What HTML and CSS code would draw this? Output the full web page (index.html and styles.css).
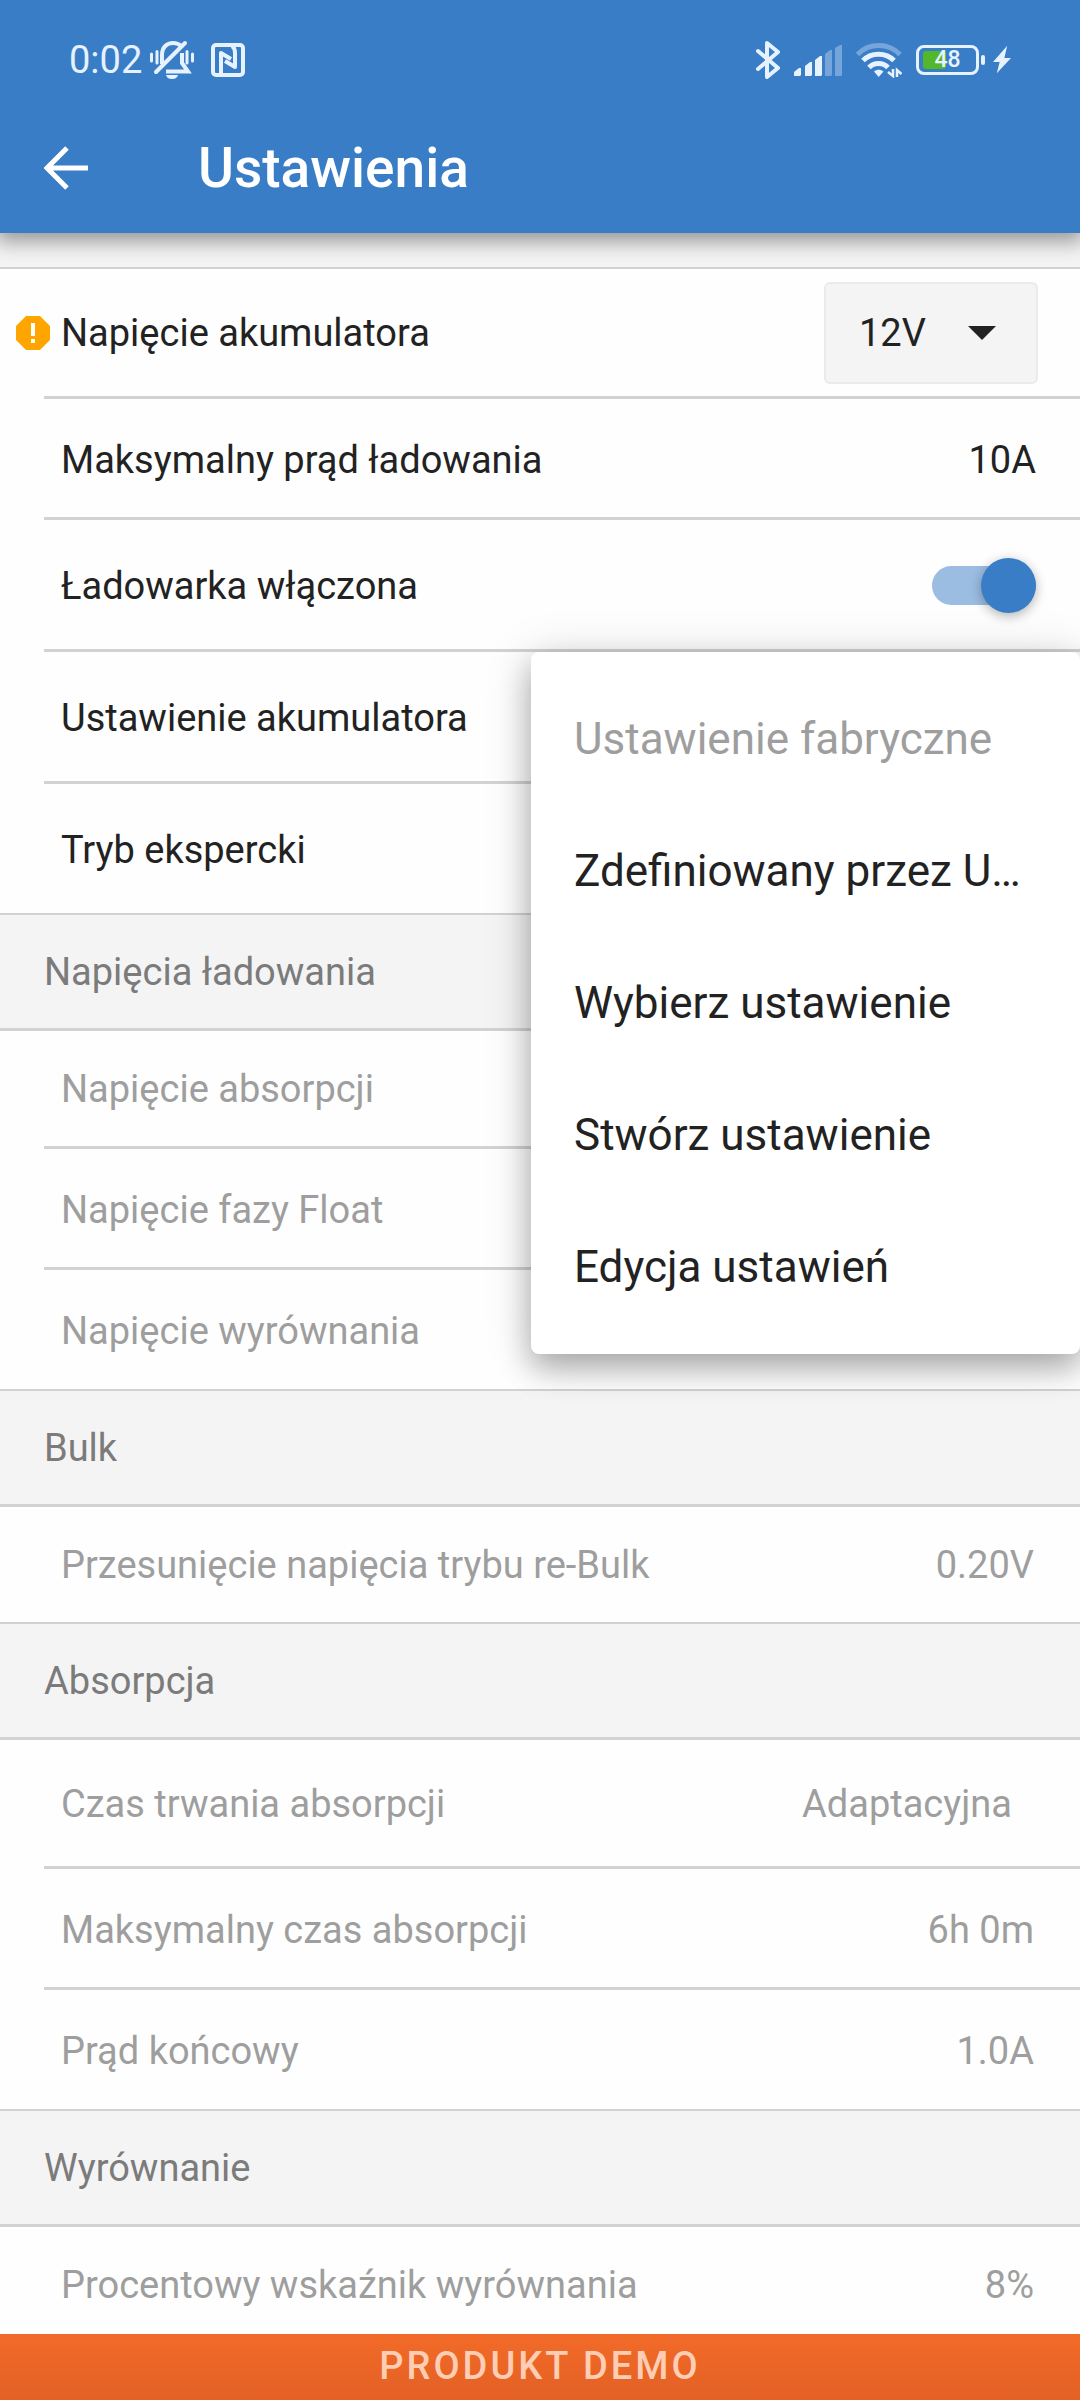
FILE: index.html
```html
<!DOCTYPE html>
<html lang="pl">
<head>
<meta charset="utf-8">
<meta name="viewport" content="width=device-width, initial-scale=1">
<title>Ustawienia</title>
<link rel="stylesheet" href="styles.css">
</head>
<body>
<div class="app">
  <header class="top">
    <div class="status">
      <div class="status-group status-left">
        <span class="clock">0:02</span>
        <svg class="icon-bell" width="44" height="40" viewBox="0 0 44 40" fill="none" stroke="currentColor" stroke-width="4" aria-hidden="true">
          <path d="M12 24V15C12 7 17 3 23 3c3 0 6 1 8 3"/>
          <path d="M32 13v10l6 8.500H16"/>
          <path d="M35 3 6 32" stroke-linecap="round"/>
          <path d="M1.500 14v7M7 11.500v11.500M37 11.500v11.500M42.500 14v7" stroke-width="3" stroke-linecap="round"/>
          <path d="M16 35h12c-1 3-3 4-6 4s-5-1-6-4z" fill="currentColor" stroke="none"/>
        </svg>
        <svg class="icon-nfc" width="34" height="34" viewBox="0 0 34 34" fill="none" stroke="currentColor" stroke-width="4" stroke-linejoin="round" aria-hidden="true">
          <rect x="2" y="2" width="30" height="30" rx="3"/>
          <path d="M10 31V10l10 6M21 3c3 2 3 4 3 7v14L14 18"/>
        </svg>
      </div>
      <div class="status-group status-right">
        <svg width="24" height="38" viewBox="0 0 24 38" fill="none" stroke="currentColor" stroke-width="4" stroke-linejoin="round" stroke-linecap="round" aria-hidden="true">
          <path d="M2 10l20 17-11 9V2l11 9L2 28"/>
        </svg>
        <svg width="48" height="31" viewBox="0 0 48 31" fill="currentColor" aria-hidden="true">
          <path d="M0 27l5-4h2v7l-1 1H0zM11 21l5-4h2v13l-1 1h-6zM21 15l5-4h2v19l-1 1h-6z"/>
          <path d="M31 9l5-4h2v25l-1 1h-6zM41 3l5-3h2v30l-1 1h-6z" opacity=".35"/>
        </svg>
        <svg width="46" height="35" viewBox="0 0 46 35" fill="none" stroke="currentColor" stroke-width="5" aria-hidden="true">
          <path d="M1.500 11.500C13-.5 32.500-.5 44 11.500" opacity=".35"/>
          <path d="M7 17.500C15 9 30 9 38 17.500"/>
          <path d="M13 24.500C18 19 27 19 32 24.500"/>
          <path d="M18 28.500c3-2.500 6.500-2.500 9.500 0L22.700 34z" fill="currentColor" stroke="none"/>
          <path d="M37 26v7l-5-4M41 34v-7l4.500 4" stroke-width="2.500"/>
        </svg>
        <span class="battery"><span class="battery-level"></span><span class="battery-text">48</span></span>
        <svg width="18" height="30" viewBox="0 0 19 30" fill="currentColor" aria-hidden="true">
          <path d="M15 0 0 17h7L4 29 19 13h-7z"/>
        </svg>
      </div>
    </div>
    <div class="appbar">
      <button class="back" type="button" aria-label="Wstecz">
        <svg width="44" height="44" viewBox="0 0 44 44" fill="none" stroke="currentColor" stroke-width="5" aria-hidden="true">
          <path d="M23 2 3 22l20 20M3 22h41"/>
        </svg>
      </button>
      <h1 class="title">Ustawienia</h1>
    </div>
  </header>

  <main class="settings">
    <section class="group">
      <div class="row row-select">
        <svg class="warning" width="34" height="34" viewBox="0 0 34 34" aria-hidden="true">
          <path d="M10 0h14l10 10v14L24 34H10L0 24V10z" fill="#ffa500"/>
          <path d="M15 7h4v13h-4zM15 23h4v4h-4z" fill="#fff"/>
        </svg>
        <label class="label" for="voltage">Napięcie akumulatora</label>
        <span class="dropdown">
          <select id="voltage"><option>12V</option></select>
          <svg class="caret" width="28" height="14" viewBox="0 0 28 14" aria-hidden="true"><path d="M0 0h28L14 14z" fill="#222"/></svg>
        </span>
      </div>
      <div class="row">
        <span class="label">Maksymalny prąd ładowania</span>
        <span class="value">10A</span>
      </div>
      <div class="row row-tall">
        <label class="label" for="charger">Ładowarka włączona</label>
        <input class="switch" id="charger" type="checkbox" role="switch" checked>
      </div>
      <div class="row row-tall">
        <span class="label">Ustawienie akumulatora</span>
        <div class="menu" role="menu">
          <button class="menu-item" type="button" role="menuitem" disabled>Ustawienie fabryczne</button>
          <button class="menu-item" type="button" role="menuitem">Zdefiniowany przez U…</button>
          <button class="menu-item" type="button" role="menuitem">Wybierz ustawienie</button>
          <button class="menu-item" type="button" role="menuitem">Stwórz ustawienie</button>
          <button class="menu-item" type="button" role="menuitem">Edycja ustawień</button>
        </div>
      </div>
      <div class="row row-tall">
        <span class="label">Tryb ekspercki</span>
      </div>
    </section>

    <section class="group group-disabled">
      <h2 class="heading">Napięcia ładowania</h2>
      <div class="row"><span class="label">Napięcie absorpcji</span></div>
      <div class="row"><span class="label">Napięcie fazy Float</span></div>
      <div class="row"><span class="label">Napięcie wyrównania</span></div>
    </section>

    <section class="group group-disabled">
      <h2 class="heading">Bulk</h2>
      <div class="row"><span class="label">Przesunięcie napięcia trybu re-Bulk</span><span class="value">0.20V</span></div>
    </section>

    <section class="group group-disabled">
      <h2 class="heading">Absorpcja</h2>
      <div class="row row-tall">
        <label class="label" for="absorption">Czas trwania absorpcji</label>
        <select class="plain-select" id="absorption" disabled><option>Adaptacyjna</option></select>
      </div>
      <div class="row"><span class="label">Maksymalny czas absorpcji</span><span class="value">6h 0m</span></div>
      <div class="row"><span class="label">Prąd końcowy</span><span class="value">1.0A</span></div>
    </section>

    <section class="group group-disabled">
      <h2 class="heading">Wyrównanie</h2>
      <div class="row"><span class="label">Procentowy wskaźnik wyrównania</span><span class="value">8%</span></div>
    </section>
  </main>

  <footer class="demo">PRODUKT DEMO</footer>
</div>
</body>
</html>
```
FILE: styles.css
```css
:root {
  --blue: #397dc6;
  --line: #d2d2d2;
  --surface: #fefefe;
  --shade: #f4f4f4;
  --text: #222;
  --muted: #9e9e9e;
}

* {
  box-sizing: border-box;
}

body {
  margin: 0;
  background: var(--surface);
  color: var(--text);
  font: 38px/46px Roboto, sans-serif;
}

button,
select {
  font: inherit;
  color: inherit;
  border: 0;
  background: none;
}

svg {
  display: block;
  flex: none;
}

.app {
  display: flex;
  flex-direction: column;
  height: 100vh;
  overflow: hidden;
}

/* Status and app bar */

.top {
  position: relative;
  z-index: 2;
  flex: none;
  background: var(--blue);
  color: #fff;
  box-shadow: 0 4px 20px 4px rgba(0, 0, 0, 0.4);
}

.status {
  display: flex;
  justify-content: space-between;
  align-items: center;
  height: 120px;
  padding: 0 69px;
  color: #e6f2ff;
}

.status-group {
  display: flex;
  align-items: center;
}

.clock {
  width: 81px;
}

.icon-nfc {
  margin-left: 17px;
}

.status-right {
  gap: 14px;
}

.battery {
  position: relative;
  display: flex;
  align-items: center;
  justify-content: center;
  width: 63px;
  height: 30px;
  border: 3px solid;
  border-radius: 8px;
}

.battery::after {
  content: "";
  position: absolute;
  left: 62px;
  width: 4px;
  height: 10px;
  border-radius: 2px;
  background: currentColor;
}

.battery-level {
  position: absolute;
  left: 4px;
  width: 23px;
  height: 18px;
  border-radius: 3px;
  background: #52b82a;
}

.battery-text {
  position: relative;
  font-size: 23px;
  font-weight: 500;
  line-height: 24px;
}

.appbar {
  display: flex;
  align-items: center;
  height: 113px;
  padding: 0 44px 18px;
}

.back {
  width: 154px;
  padding: 0;
}

.title {
  margin: 0;
  font-size: 55px;
  font-weight: 500;
  line-height: 64px;
}

/* Settings list */

.settings {
  flex: 1;
  min-height: 0;
  padding-top: 34px;
  background: var(--shade);
}

.group {
  border-top: 2px solid var(--line);
  background: var(--surface);
}

.heading {
  margin: 0;
  padding: 34px 44px 33px;
  border-bottom: 3px solid var(--line);
  background: var(--shade);
  color: #7b7b7b;
  font-size: inherit;
  font-weight: 400;
}

.row {
  position: relative;
  display: flex;
  align-items: center;
  justify-content: space-between;
  min-height: 121px;
  margin-left: 44px;
  padding: 3px 44px 0 17px;
  border-bottom: 3px solid var(--line);
}

.row:last-child {
  min-height: 119px;
  border-bottom: 0;
}

.heading + .row {
  min-height: 118px;
  padding-top: 1px;
}

.heading + .row:last-child {
  min-height: 115px;
}

.row-select {
  min-height: 130px;
  padding-top: 0;
  padding-right: 42px;
}

.row-tall {
  min-height: 132px;
  padding-top: 2px;
}

.row-tall:last-child,
.heading + .row-tall {
  min-height: 129px;
}

.group-disabled .row {
  padding-right: 46px;
  color: var(--muted);
}

.warning {
  position: absolute;
  left: -28px;
}

.dropdown {
  position: relative;
  display: flex;
  align-items: center;
}

.dropdown select {
  appearance: none;
  width: 214px;
  height: 102px;
  padding: 0 33px;
  border: 2px solid #eaeaea;
  border-radius: 6px;
  background: var(--shade);
}

.caret {
  position: absolute;
  right: 42px;
  pointer-events: none;
}

.plain-select {
  appearance: none;
  margin-right: 22px;
  padding: 0;
  opacity: 1;
}

.switch {
  appearance: none;
  display: grid;
  align-items: center;
  width: 104px;
  height: 55px;
  margin: 0;
}

.switch::before,
.switch::after {
  content: "";
  grid-area: 1 / 1;
}

.switch::before {
  height: 39px;
  border-radius: 20px;
  background: #9bbde2;
}

.switch::after {
  justify-self: end;
  width: 55px;
  height: 55px;
  border-radius: 50%;
  background: var(--blue);
  box-shadow: 0 3px 12px rgba(0, 0, 0, 0.3);
}

/* Popup menu */

.menu {
  position: absolute;
  z-index: 1;
  top: 0;
  right: 0;
  width: 549px;
  padding: 21px 0;
  border-radius: 8px;
  background: #fff;
  box-shadow: 0 14px 30px rgba(0, 0, 0, 0.28), 0 4px 50px rgba(0, 0, 0, 0.14);
}

.menu-item {
  display: block;
  width: 100%;
  height: 132px;
  padding: 0 43px;
  font-size: 44px;
  line-height: 52px;
  text-align: left;
  white-space: nowrap;
}

.menu-item:disabled {
  color: var(--muted);
}

/* Demo banner */

.demo {
  position: relative;
  z-index: 1;
  flex: none;
  height: 66px;
  background: linear-gradient(#f26a28, #e36124);
  color: #ffcdb3;
  font-weight: 500;
  letter-spacing: 3px;
  line-height: 64px;
  text-align: center;
}
```
